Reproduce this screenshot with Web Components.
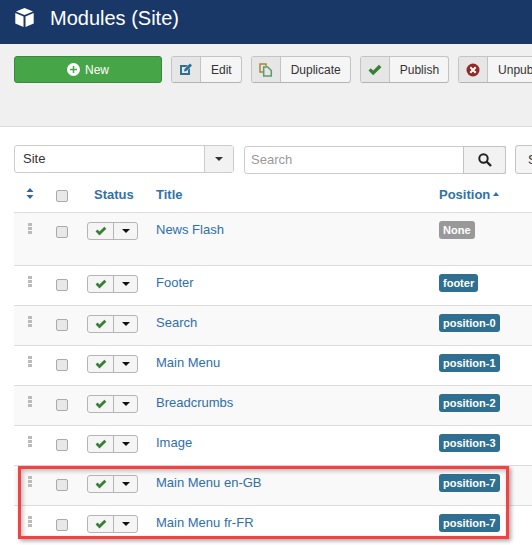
<!DOCTYPE html>
<html>
<head>
<meta charset="utf-8">
<title>Modules (Site)</title>
<style>
    html, body { margin: 0; padding: 0; background: #fff; }
    body { font-family: "Liberation Sans", Arial, sans-serif; font-size: 12px; width: 532px; height: 545px; overflow: hidden; position: relative; }
</style>
</head>
<body>
<admin-header>Modules (Site)</admin-header>
<admin-toolbar>
    <new-button>New</new-button>
    <tool-button icon="edit">Edit</tool-button>
    <tool-button icon="copy">Duplicate</tool-button>
    <tool-button icon="check">Publish</tool-button>
    <tool-button icon="cancel">Unpublish</tool-button>
</admin-toolbar>
<filter-bar></filter-bar>
<module-table>
    <module-row title-text="News Flash" position="None" tall></module-row>
    <module-row title-text="Footer" position="footer"></module-row>
    <module-row title-text="Search" position="position-0"></module-row>
    <module-row title-text="Main Menu" position="position-1"></module-row>
    <module-row title-text="Breadcrumbs" position="position-2"></module-row>
    <module-row title-text="Image" position="position-3"></module-row>
    <module-row title-text="Main Menu en-GB" position="position-7"></module-row>
    <module-row title-text="Main Menu fr-FR" position="position-7"></module-row>
</module-table>
<red-highlight></red-highlight>

<script>
const icons = {
    edit: `<svg width="14" height="13" viewBox="0 0 14 13"><path fill="#2f6f92" d="M1 2h8L7 4H3v6h6V7l2-2v7H1z"/><path fill="#2f6f92" d="M11 0.500 13 2.500 7.500 8 5 8.500 5.500 6z"/></svg>`,
    copy: `<svg width="14" height="14" viewBox="0 0 14 14"><path fill="none" stroke="#a8892c" stroke-width="1.500" d="M7 3V1H1v8h3"/><path fill="none" stroke="#5f9a70" stroke-width="1.500" d="M4.700 4h4l3.600 3.500V13H4.700z"/></svg>`,
    check: `<svg width="14" height="12" viewBox="0 0 14 12"><path fill="#378137" d="M0.500 6.500 2.800 4.300 5.200 6.600 11 .8 13.400 3.200 5.200 11.300z"/></svg>`,
    cancel: `<svg width="14" height="14" viewBox="0 0 14 14"><circle cx="7" cy="7" r="6.500" fill="#942a25"/><path stroke="#fff" stroke-width="2" d="M4.300 4.300l5.400 5.400M9.700 4.300l-5.400 5.400"/></svg>`
};

const headerTemplate = document.createElement('template');
headerTemplate.innerHTML = `
    <style>
        :host { display: flex; align-items: center; height: 44px; background: #1a3867; color: #fff; box-sizing: border-box; padding: 0 0 8px 15px; }
        svg { display: block; flex: none; margin-top: -2px; }
        h1 { margin: 0 0 0 16px; font: 400 20px/24px "Liberation Sans", Arial, sans-serif; }
    </style>
    <svg width="19" height="19" viewBox="0 0 19 19">
        <path fill="#fff" d="M9.500 0 18 3.500 9.500 7 1 3.500z"/>
        <path fill="#fff" d="M0.300 5 8.500 8.500V19L0.300 15.500z"/>
        <path fill="#fff" d="M18.700 5 10.500 8.500V19l8.200-3.500z"/>
    </svg>
    <h1><slot></slot></h1>
`;
class AdminHeader extends HTMLElement {
    constructor() {
        super();
        this.attachShadow({mode: 'open'});
        this.shadowRoot.append(headerTemplate.content.cloneNode(true));
    }
}
customElements.define('admin-header', AdminHeader);

const toolbarTemplate = document.createElement('template');
toolbarTemplate.innerHTML = `
    <style>
        :host { display: flex; align-items: flex-start; gap: 9px; height: 83px; box-sizing: border-box; padding: 12px 0 0 14px; background: #f0f0f0; border-bottom: 1px solid #dcdcdc; overflow: hidden; }
    </style>
    <slot></slot>
`;
class AdminToolbar extends HTMLElement {
    constructor() {
        super();
        this.attachShadow({mode: 'open'});
        this.shadowRoot.append(toolbarTemplate.content.cloneNode(true));
    }
}
customElements.define('admin-toolbar', AdminToolbar);

const newButtonTemplate = document.createElement('template');
newButtonTemplate.innerHTML = `
    <style>
        :host { display: flex; flex: none; align-items: center; justify-content: center; gap: 5px; width: 148px; height: 27px; box-sizing: border-box; background: #46a546; border: 1px solid #3c8a3c; border-radius: 3px; color: #fff; font-size: 12px; }
        svg { display: block; }
    </style>
    <svg width="13" height="13" viewBox="0 0 13 13"><circle cx="6.500" cy="6.500" r="6.500" fill="#fff"/><path stroke="#46a546" stroke-width="1.500" d="M6.500 3v7M3 6.500h7"/></svg>
    <slot></slot>
`;
class NewButton extends HTMLElement {
    constructor() {
        super();
        this.attachShadow({mode: 'open'});
        this.shadowRoot.append(newButtonTemplate.content.cloneNode(true));
    }
}
customElements.define('new-button', NewButton);

const toolButtonTemplate = document.createElement('template');
toolButtonTemplate.innerHTML = `
    <style>
        :host { display: flex; flex: none; height: 27px; box-sizing: border-box; background: #f5f5f5; border: 1px solid #c4c4c4; border-bottom-color: #b3b3b3; border-radius: 3px; color: #333; font-size: 12px; }
        .icon { display: flex; align-items: center; justify-content: center; width: 28px; background: #e6e6e6; border-right: 1px solid #c4c4c4; }
        .label { padding: 0 9px 0 10px; line-height: 27px; height: 25px; white-space: nowrap; }
        svg { display: block; }
    </style>
    <span class="icon"></span>
    <span class="label"><slot></slot></span>
`;
class ToolButton extends HTMLElement {
    constructor() {
        super();
        this.attachShadow({mode: 'open'});
        this.shadowRoot.append(toolButtonTemplate.content.cloneNode(true));
        this.shadowRoot.querySelector('.icon').innerHTML = icons[this.getAttribute('icon')];
    }
}
customElements.define('tool-button', ToolButton);

const filterTemplate = document.createElement('template');
filterTemplate.innerHTML = `
    <style>
        :host { display: flex; align-items: flex-start; height: 48px; box-sizing: border-box; padding: 18px 0 0 14px; overflow: hidden; font-size: 13px; color: #333; }
        .select { display: flex; flex: none; width: 220px; height: 28px; box-sizing: border-box; border: 1px solid #ccc; border-radius: 3px; }
        .select .value { flex: 1; padding-left: 8px; line-height: 26px; }
        .select .arrow { display: flex; align-items: center; justify-content: center; width: 28px; background: #f2f2f2; border-left: 1px solid #ccc; }
        .caret { width: 0; height: 0; border: 4px solid transparent; border-top: 4px solid #333; border-bottom: 0; }
        .search { display: flex; flex: none; width: 262px; height: 28px; margin: 1px 0 0 10px; box-sizing: border-box; border: 1px solid #ccc; border-radius: 3px 0 0 3px; }
        .search .input { flex: 1; padding-left: 6px; line-height: 26px; color: #999; }
        .search .go { display: flex; align-items: center; justify-content: center; width: 41px; margin: -1px -1px -1px 0; background: #f2f2f2; border: 1px solid #c4c4c4; border-radius: 0 3px 3px 0; }
        .tools { flex: none; width: 90px; height: 29px; margin-left: 9px; box-sizing: border-box; padding-left: 12px; line-height: 27px; background: #f5f5f5; border: 1px solid #c4c4c4; border-radius: 3px; }
        svg { display: block; }
    </style>
    <div class="select"><span class="value">Site</span><span class="arrow"><span class="caret"></span></span></div>
    <div class="search">
        <span class="input">Search</span>
        <span class="go"><svg width="14" height="14" viewBox="0 0 14 14"><circle cx="5.500" cy="5.500" r="4.200" fill="none" stroke="#222" stroke-width="2"/><path stroke="#222" stroke-width="2.400" d="M8.500 8.500l4.500 4.500"/></svg></span>
    </div>
    <div class="tools">Search Tools</div>
`;
class FilterBar extends HTMLElement {
    constructor() {
        super();
        this.attachShadow({mode: 'open'});
        this.shadowRoot.append(filterTemplate.content.cloneNode(true));
    }
}
customElements.define('filter-bar', FilterBar);

const tableTemplate = document.createElement('template');
tableTemplate.innerHTML = `
    <style>
        :host { display: block; margin-left: 14px; font-size: 13px; }
        .head { display: grid; grid-template-columns: 34px 39px 69px 283px 1fr; align-items: center; height: 36px; padding-top: 1px; border-bottom: 1px solid #ddd; color: #3071a9; font-weight: 700; }
        .sort { display: flex; justify-content: center; margin-left: -3px; margin-top: -1px; }
        .box { display: block; box-sizing: border-box; width: 12px; height: 12px; margin-left: 8px; margin-top: 4px; background: #e8e8e8; border: 1px solid #aaa; border-radius: 2px; }
        .status { padding-left: 7px; }
        .pos { display: flex; align-items: center; gap: 3px; }
        .up { width: 0; height: 0; border: 3.500px solid transparent; border-bottom: 4px solid #3071a9; border-top: 0; }
        svg { display: block; }
    </style>
    <div class="head">
        <span class="sort"><svg width="8" height="11" viewBox="0 0 8 11"><path fill="#2a69a5" d="M4 0l3.500 4h-7zM4 11l3.500-4h-7z"/></svg></span>
        <span><span class="box"></span></span>
        <span class="status">Status</span>
        <span>Title</span>
        <span class="pos">Position<span class="up"></span></span>
    </div>
    <slot></slot>
`;
class ModuleTable extends HTMLElement {
    constructor() {
        super();
        this.attachShadow({mode: 'open'});
        this.shadowRoot.append(tableTemplate.content.cloneNode(true));
    }
}
customElements.define('module-table', ModuleTable);

const rowTemplate = document.createElement('template');
rowTemplate.innerHTML = `
    <style>
        :host { display: grid; grid-template-columns: 34px 39px 69px 283px 1fr; align-items: start; height: 40px; box-sizing: border-box; padding-top: 7px; border-bottom: 1px solid #ddd; font-size: 13px; }
        :host([tall]) { height: 53px; }
        :host(:nth-child(odd)) { background: #f9f9f9; }
        .drag { display: flex; flex-direction: column; gap: 1px; margin-left: 14px; margin-top: 3px; }
        .drag i { display: block; width: 4px; height: 3px; background: #bbb; }
        .box { display: block; box-sizing: border-box; width: 12px; height: 12px; margin-left: 8px; margin-top: 6px; background: #e8e8e8; border: 1px solid #aaa; border-radius: 2px; }
        .toggle { display: flex; width: 51px; height: 18px; margin-top: 2px; box-sizing: border-box; background: #f5f5f5; border: 1px solid #b5b5b5; border-radius: 3px; }
        .toggle .ok { display: flex; align-items: center; justify-content: center; width: 25px; border-right: 1px solid #b5b5b5; }
        .toggle .more { display: flex; align-items: center; justify-content: center; flex: 1; }
        .caret { width: 0; height: 0; border: 4px solid transparent; border-top: 4px solid #111; border-bottom: 0; }
        .title { color: #2f6fa8; line-height: 18px; padding-top: 1px; }
        .badge { display: inline-block; height: 18px; box-sizing: border-box; margin-top: 1px; padding: 0 4px; line-height: 19px; font-size: 11px; font-weight: 700; color: #fff; background: #2f6f92; border-radius: 3px; vertical-align: top; }
        .badge.none { background: #999; }
        svg { display: block; }
    </style>
    <span class="drag"><i></i><i></i><i></i></span>
    <span class="box"></span>
    <span class="toggle">
        <span class="ok"><svg width="12" height="10" viewBox="0 0 14 12"><path fill="#378137" d="M0.500 6.500 2.800 4.300 5.200 6.600 11 .8 13.400 3.200 5.200 11.300z"/></svg></span>
        <span class="more"><span class="caret"></span></span>
    </span>
    <span class="title"></span>
    <span><span class="badge"></span></span>
`;
class ModuleRow extends HTMLElement {
    constructor() {
        super();
        this.attachShadow({mode: 'open'});
        this.shadowRoot.append(rowTemplate.content.cloneNode(true));
    }
    connectedCallback() {
        this.shadowRoot.querySelector('.title').textContent = this.getAttribute('title-text');
        let badge = this.shadowRoot.querySelector('.badge');
        badge.textContent = this.getAttribute('position');
        if (this.getAttribute('position') == 'None') badge.classList.add('none');
    }
}
customElements.define('module-row', ModuleRow);

// annotation box drawn over the last two rows
const highlightTemplate = document.createElement('template');
highlightTemplate.innerHTML = `
    <style>
        :host { display: block; position: absolute; left: 18px; top: 466px; width: 491px; height: 73px; box-sizing: border-box; border: 3px solid #f5413f; box-shadow: 2px 2px 4px rgba(0,0,0,.35), inset 2px 2px 4px rgba(0,0,0,.25); pointer-events: none; }
    </style>
`;
class RedHighlight extends HTMLElement {
    constructor() {
        super();
        this.attachShadow({mode: 'open'});
        this.shadowRoot.append(highlightTemplate.content.cloneNode(true));
    }
}
customElements.define('red-highlight', RedHighlight);
</script>
</body>
</html>
